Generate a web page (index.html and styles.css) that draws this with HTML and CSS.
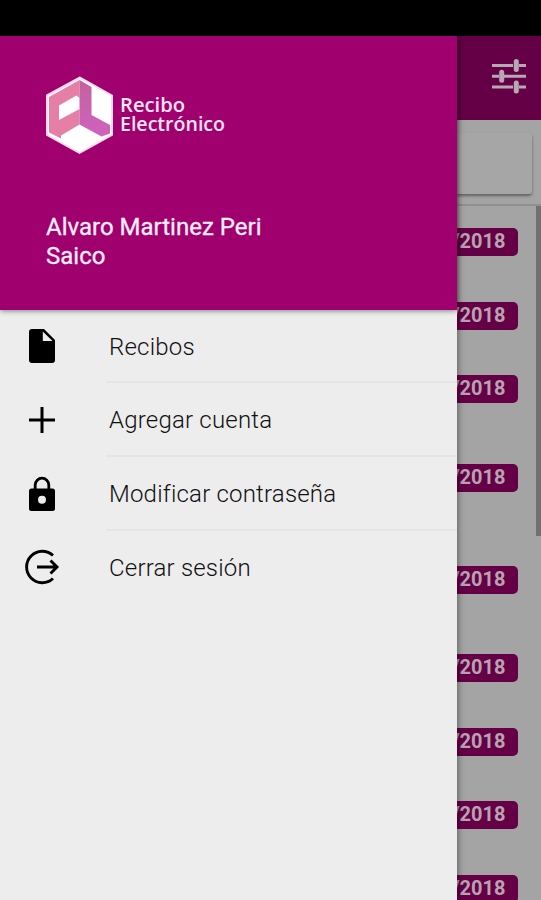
FILE: index.html
```html
<!DOCTYPE html>
<html lang="es">
<head>
    <meta charset="UTF-8">
    <meta name="viewport" content="width=device-width, initial-scale=1.0">
    <title>Recibo Electrónico</title>
    <link rel="stylesheet" href="styles.css">
</head>
<body>

    <div class="status-bar"></div>

    <div class="app">
        <nav class="drawer">
            <header class="drawer-header">
                <svg class="logo" viewBox="0 0 200 90" role="img">
                    <path d="M35 2.5 L67 20.5 V60 L34.5 78 L2 60 V20.5 Z" fill="#fff" stroke="#fbd9ec" stroke-width="2" stroke-linejoin="round"/>
                    <path fill-rule="evenodd" d="M34.5 5 V49.5 L16 60.5 V63.5 L4 57.5 V22 Z M14 30.5 V45 L34.5 34 V23 L31.5 20.5 Z" fill="#e67fa6"/>
                    <path d="M34.5 5 L46.5 12 V40 L65 50 V58.5 L56.5 61.5 L34.5 49.5 Z" fill="url(#fold)"/>
                    <defs>
                        <linearGradient id="fold" x1="0" y1="0" x2="0" y2="1">
                            <stop offset="0" stop-color="#c4629f"/>
                            <stop offset="1" stop-color="#cf62bd"/>
                        </linearGradient>
                    </defs>
                    <text class="logo-text" x="75" y="36.5" textLength="65" lengthAdjust="spacingAndGlyphs">Recibo</text>
                    <text class="logo-text" x="75" y="56" textLength="105" lengthAdjust="spacingAndGlyphs">Electrónico</text>
                </svg>
                <div class="user-name">Alvaro Martinez Peri Saico</div>
            </header>

            <ul class="menu">
                <li class="item">
                    <svg class="icon" viewBox="0 0 36 36">
                        <path d="M8 1 H20 L31 12 V32 Q31 35 28 35 H8 Q5 35 5 32 V4 Q5 1 8 1 Z"/>
                        <path d="M18.8 3.5 V13 H28.5 Z" fill="#ededed"/>
                    </svg>
                    <span class="label">Recibos</span>
                </li>
                <li class="item">
                    <svg class="icon" viewBox="0 0 36 36">
                        <path d="M18 5 V31 M5 18 H31" fill="none" stroke="#000" stroke-width="3"/>
                    </svg>
                    <span class="label">Agregar cuenta</span>
                </li>
                <li class="item">
                    <svg class="icon" viewBox="0 0 36 36">
                        <path d="M11.2 14 V9 A6.8 6.8 0 0 1 24.8 9 V14" fill="none" stroke="#000" stroke-width="2.8"/>
                        <rect x="5" y="12.5" width="26" height="22.5" rx="2.5"/>
                        <circle cx="18" cy="23.7" r="4" fill="#ededed"/>
                    </svg>
                    <span class="label">Modificar contraseña</span>
                </li>
                <li class="item">
                    <svg class="icon" viewBox="0 0 36 36">
                        <path d="M29 6.5 A15.7 15.7 0 1 0 29 29.5 M13 18 H33 M26.5 11.5 L33 18 L26.5 24.5" fill="none" stroke="#000" stroke-width="2.9"/>
                    </svg>
                    <span class="label">Cerrar sesión</span>
                </li>
            </ul>
        </nav>

        <main class="page">
            <div class="toolbar">
                <svg class="tune" viewBox="0 0 36 36">
                    <path d="M1 7.5 H22 M28 7.5 H35 M1 18.3 H8 M13 18.3 H35 M1 29 H22 M28 29 H35" stroke-width="3"/>
                    <path d="M25.3 3.5 V11.5 M10.7 14.3 V22.3 M25.3 25 V33" stroke-width="5" stroke-linecap="round"/>
                </svg>
            </div>
            <div class="search">
                <div class="search-box"></div>
            </div>
            <div class="content">
                <div class="receipts">
                    <div class="receipt"><span class="date">/2018</span></div>
                    <div class="receipt"><span class="date">/2018</span></div>
                    <div class="receipt tall"><span class="date">/2018</span></div>
                    <div class="receipt taller"><span class="date">/2018</span></div>
                    <div class="receipt medium"><span class="date">/2018</span></div>
                    <div class="receipt"><span class="date">/2018</span></div>
                    <div class="receipt"><span class="date">/2018</span></div>
                    <div class="receipt"><span class="date">/2018</span></div>
                    <div class="receipt"><span class="date">/2018</span></div>
                </div>
                <div class="scrollbar"></div>
            </div>
        </main>
    </div>

</body>
</html>
```

FILE: styles.css
```css
* {
    box-sizing: border-box;
}
body {
    margin: 0;
    height: 900px;
    overflow: hidden;
    font-family: Roboto, "Liberation Sans", sans-serif;
    background: #000;
}
.status-bar {
    height: 36px;
    background: #000;
}
.app {
    display: flex;
    height: 864px;
    overflow: hidden;
}

/* side menu */
.drawer {
    flex: none;
    width: 457.4px;
    background: #ededed;
    box-shadow: 0 0 7px rgba(0, 0, 0, 0.55);
    z-index: 1;
}
.drawer-header {
    height: 273.5px;
    padding: 39px 45px 0;
    background: #a0006e;
    box-shadow: 0 1px 5px rgba(0, 0, 0, 0.45);
}
.logo {
    display: block;
    width: 200px;
    height: 90px;
}
.logo-text {
    font-family: "Open Sans", sans-serif;
    font-size: 20.5px;
    font-weight: 600;
    fill: #fce4f3;
}
.user-name {
    width: 240px;
    margin-top: 48px;
    padding-left: 1px;
    font-size: 24px;
    line-height: 28.5px;
    color: #fdeef8;
    -webkit-text-stroke: 0.3px #fdeef8;
}
.menu {
    margin: 0;
    padding: 0;
    list-style: none;
}
.item {
    display: flex;
    align-items: center;
    height: 73.7px;
    padding-left: 24px;
}
.icon {
    flex: none;
    width: 36px;
    height: 36px;
    margin-right: 46px;
}
.label {
    flex: 1;
    height: 73.7px;
    padding-left: 3px;
    font-size: 24px;
    font-weight: 300;
    line-height: 74px;
    letter-spacing: 0.2px;
    color: #111;
    border-bottom: 2px solid #e5e5e5;
}
.item:last-child .label {
    border-bottom: none;
}

/* dimmed page behind the menu */
.page {
    display: flex;
    flex-direction: column;
    flex: 1;
    min-width: 0;
    background: #a4a4a4;
}
.toolbar {
    display: flex;
    flex: none;
    justify-content: flex-end;
    height: 84px;
    padding: 22px 14px 0 0;
    background: #650047;
}
.tune {
    width: 36px;
    height: 36px;
    fill: none;
    stroke: #b8a8b4;
}
.search {
    flex: none;
    height: 86px;
    padding: 13px 9px 10px 0;
    border-bottom: 2px solid #909090;
}
.search-box {
    height: 61px;
    background: #a6a6a6;
    border-radius: 0 3px 3px 0;
    box-shadow: 0 2px 3px rgba(0, 0, 0, 0.4);
}
.content {
    display: flex;
    flex: 1;
    min-height: 0;
}
.receipts {
    flex: 1;
    min-width: 0;
    padding: 22px 18.5px 0 0;
    overflow: hidden;
}
.receipt {
    display: flex;
    justify-content: flex-end;
    height: 73.7px;
}
.receipt.tall {
    height: 89px;
}
.receipt.taller {
    height: 102px;
}
.receipt.medium {
    height: 87.5px;
}
.date {
    flex: none;
    height: 28px;
    padding: 0 12px 0 10px;
    font-size: 20px;
    font-weight: 700;
    line-height: 27px;
    color: #b8a3b0;
    background: #650047;
    border-radius: 5px;
}
.scrollbar {
    flex: none;
    width: 5px;
    height: 330px;
    background: #707070;
}
```
